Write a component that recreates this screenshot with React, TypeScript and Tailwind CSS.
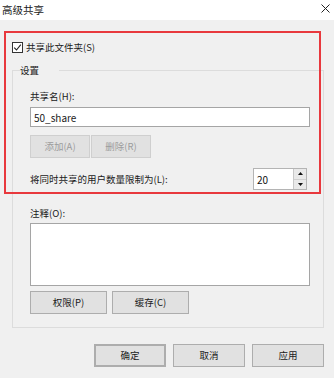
import React from 'react'

const btn = 'h-[23px] border border-[#adadad] bg-[#e1e1e1] text-[9.5px] text-[#1a1a1a] flex items-center justify-center'

function CheckBox() {
  return (
    <span className="w-[11px] h-[11px] border border-[#333] bg-white flex items-center justify-center">
      <svg width="9" height="9" viewBox="0 0 9 9">
        <path d="M1.2 4.6 L3.5 7 L7.8 1.6" fill="none" stroke="#222" strokeWidth="1.1" />
      </svg>
    </span>
  )
}

function Spinner() {
  return (
    <div className="flex h-[22px] border border-[#b4b4b4]">
      <div className="w-[40px] bg-white flex items-center pl-[3px] text-[10px] text-[#111] border-r border-[#c8c8c8]">20</div>
      <div className="w-[12px] flex flex-col bg-[#e9e9e9]">
        <div className="flex-1 flex items-center justify-center border-b border-[#d0d0d0]">
          <svg width="5" height="3" viewBox="0 0 5 3"><path d="M0 3 L2.5 0 L5 3 Z" fill="#111" /></svg>
        </div>
        <div className="flex-1 flex items-center justify-center">
          <svg width="5" height="3" viewBox="0 0 5 3"><path d="M0 0 L2.5 3 L5 0 Z" fill="#111" /></svg>
        </div>
      </div>
    </div>
  )
}

export default function App() {
  return (
    <div className="relative w-[334px] h-[378px] bg-[#f0f0f0] overflow-hidden font-['Noto_Sans_CJK_SC',sans-serif] text-[#1a1a1a]">
      {/* Title bar */}
      <div className="h-[20px] bg-white flex items-center justify-between pl-[2px] pr-[4px]">
        <span className="text-[10.5px] leading-[14px]">高级共享</span>
        <svg width="9" height="9" viewBox="0 0 9 9" className="mb-[3px]">
          <path d="M0.5 0.5 L8.5 8.5 M8.5 0.5 L0.5 8.5" stroke="#222" strokeWidth="1" />
        </svg>
      </div>

      <div className="pl-[12px] pr-[10px]">
        {/* Share checkbox */}
        <label className="mt-[20px] h-[14px] flex items-center gap-[3px] text-[9.5px] leading-[14px]">
          <CheckBox />
          共享此文件夹(S)
        </label>

        {/* Settings group */}
        <fieldset className="mt-[9px] border border-[#dcdcdc] pl-[17px] pr-[13px] pb-[13px]">
          <legend className="ml-[4px] px-[3px] -translate-x-[17px] text-[9.5px] leading-[14px]">设置</legend>

          <div className="mt-[12px] text-[9.5px] leading-[14px]">共享名(H):</div>
          <div className="mt-[4px] h-[20px] bg-white border border-[#a5a5a5] flex items-center pl-[3px] text-[10px]">50_share</div>

          <div className="mt-[8px] flex gap-[1px]">
            <div className={`${btn} w-[60px] bg-[#d4d4d4] border-[#cfcfcf] text-[#9c9c9c]`}>添加(A)</div>
            <div className={`${btn} w-[60px] bg-[#d4d4d4] border-[#cfcfcf] text-[#9c9c9c]`}>删除(R)</div>
          </div>

          <div className="mt-[10px] flex items-center justify-between pr-[3px]">
            <span className="text-[9.5px] leading-[14px]">将同时共享的用户数量限制为(L):</span>
            <Spinner />
          </div>

          <div className="mt-[16px] text-[9.5px] leading-[14px]">注释(O):</div>
          <div className="mt-[3px] h-[63px] bg-white border border-[#a5a5a5]" />

          <div className="mt-[5px] flex gap-[5px]">
            <div className={`${btn} w-[77px] bg-[#e1e1e1]`}>权限(P)</div>
            <div className={`${btn} w-[77px] bg-[#e1e1e1]`}>缓存(C)</div>
          </div>
        </fieldset>

        {/* Dialog buttons */}
        <div className="mt-[16px] flex justify-end gap-[7px]">
          <div className={`${btn} w-[72px] h-[22px] border-2 border-[#0078d7]`}>确定</div>
          <div className={`${btn} w-[72px] h-[22px]`}>取消</div>
          <div className={`${btn} w-[72px] h-[22px]`}>应用</div>
        </div>
      </div>

      {/* Red highlight annotation */}
      <div className="absolute left-[4px] top-[31px] w-[317px] h-[163px] border-2 border-[#e8383d] pointer-events-none" />
    </div>
  )
}
